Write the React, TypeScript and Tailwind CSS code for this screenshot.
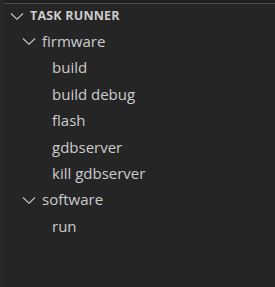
import React from "react";

const Chevron = () => (
  <svg width="16" height="16" viewBox="0 0 16 16" fill="none" className="shrink-0">
    <path d="M2 5.5L8 11.2l6-5.7" stroke="#c5c5c5" strokeWidth="1.1" />
  </svg>
);

const groups = [
  { name: "firmware", tasks: ["build", "build debug", "flash", "gdbserver", "kill gdbserver"] },
  { name: "software", tasks: ["run"] },
];

const App = () => {
  return (
    <div
      className="w-[275px] h-[287px] bg-[#252526] text-[#cccccc] overflow-hidden flex"
      style={{ fontFamily: '"Open Sans", "DejaVu Sans", sans-serif' }}
    >
      <div className="w-[5px] bg-[#282828] shrink-0" />
      <div className="flex-1">
        <div className="h-[3px] bg-[#1f1f1f]" />
        <div className="border-t border-[#4b4b4b]">
          {/* Section header */}
          <div className="h-[24px] flex items-center pl-[4px] gap-[5px]">
            <Chevron />
            <span className="text-[12.5px] font-bold tracking-[0.2px]">TASK RUNNER</span>
          </div>

          {groups.map((g) => (
            <div key={g.name}>
              <div className="h-[26.4px] flex items-center pl-[16px] gap-[5px]">
                <Chevron />
                <span className="text-[15px]">{g.name}</span>
              </div>
              {g.tasks.map((t) => (
                <div key={t} className="h-[26.4px] flex items-center pl-[47px]">
                  <span className="text-[15px]">{t}</span>
                </div>
              ))}
            </div>
          ))}
        </div>
      </div>
    </div>
  );
};

export default App;
